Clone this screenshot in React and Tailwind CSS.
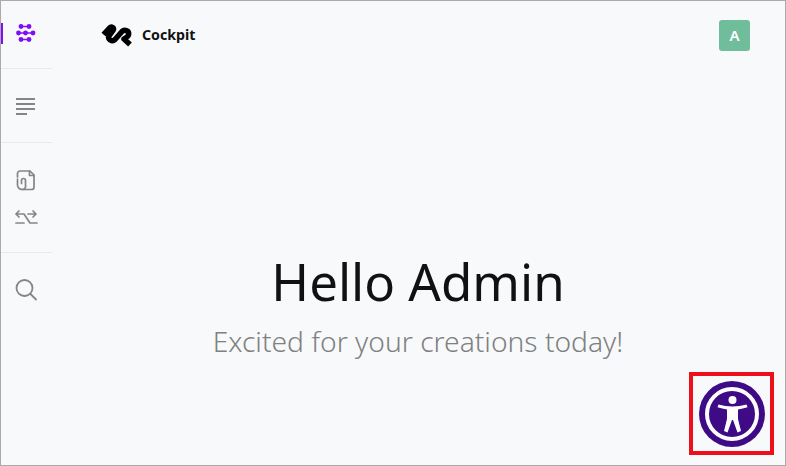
import React from "react";

const font = { fontFamily: '"Noto Sans", "Open Sans", sans-serif' };

function NavIcon({ children }) {
  return (
    <svg width="24" height="24" viewBox="0 0 24 24" fill="none" stroke="#858587" strokeWidth="1.7" strokeLinecap="round" strokeLinejoin="round">
      {children}
    </svg>
  );
}

function GridLogo() {
  return (
    <svg width="22" height="20" viewBox="0 0 22 20" fill="#7f0df5" stroke="#7f0df5">
      <path d="M6 3.500h8M2 10h18M6 16.500h8" strokeWidth="1.4" />
      <g stroke="none">
        <circle cx="6" cy="3.500" r="2.400" />
        <circle cx="14" cy="3.500" r="2.400" />
        <circle cx="3.500" cy="10" r="2.400" />
        <circle cx="10.500" cy="10" r="2.400" />
        <circle cx="18" cy="10" r="2.400" />
        <circle cx="6" cy="16.500" r="2.400" />
        <circle cx="14" cy="16.500" r="2.400" />
      </g>
    </svg>
  );
}

function Sidebar() {
  return (
    <div className="w-[51px] shrink-0 flex flex-col">
      <div className="relative h-[68px] flex items-center justify-center pr-[2px] pb-[4px] border-b border-[#e8e9ec]">
        <div className="absolute left-0 top-[22px] w-[2px] h-[21px] bg-[#7f0df5]" />
        <GridLogo />
      </div>
      <div className="h-[74px] flex items-center justify-center pr-[2px] border-b border-[#e8e9ec]">
        <svg width="20" height="18" viewBox="0 0 20 18" stroke="#858587" strokeWidth="2" fill="none">
          <path d="M0 2h19M0 7h19M0 12h19M0 17h11" />
        </svg>
      </div>
      <div className="h-[110px] flex flex-col items-center justify-center gap-[15px] pr-[2px] pt-[4px] border-b border-[#e8e9ec]">
        <NavIcon>
          <path d="M3.500 9V5.500A2.500 2.500 0 0 1 6 3h10l4 4v12a2.500 2.500 0 0 1-2.500 2.500H8" />
          <path d="M15.500 3v4.500H20" />
          <path d="M7.500 15.500v-3a2 2 0 0 1 4 0V17a3.500 3.500 0 0 1-3.500 4.500A4.500 4.500 0 0 1 3.500 17v-6" />
        </NavIcon>
        <NavIcon>
          <path d="M5 4L2 7l3 3M2 7h8l6 9h7" />
          <path d="M14 7h8M19 4l3 3-3 3" />
          <path d="M2 16h8" />
        </NavIcon>
      </div>
      <div className="flex-1 flex justify-center pr-[2px] pt-[25px]">
        <svg width="24" height="24" viewBox="0 0 24 24" fill="none" stroke="#858587" strokeWidth="1.8" strokeLinecap="round">
          <circle cx="10.500" cy="10" r="8" />
          <path d="M16.500 16l5.500 5.500" />
        </svg>
      </div>
    </div>
  );
}

function Header() {
  return (
    <div className="h-[68px] flex items-center justify-between pl-[46px] pr-[35px]">
      <div className="flex items-center gap-[4px] pb-[1px]">
        <svg width="40" height="32" viewBox="0 0 40 32" fill="none" stroke="#000" strokeWidth="5.500" strokeLinejoin="round">
          <path d="M5.500 15.500l6-6.500c2-2 5.500 0 3.500 2.500l-4 5.500c-2 3 3 6.500 6 3.500l7-8c2-2 7.500-1.500 6.500 3.500-.5 2-3.500 3-4.500 4l6 5.500" />
        </svg>
        <span className="text-[14.200px] font-bold text-[#111]">Cockpit</span>
      </div>
      <div className="w-[31px] h-[31px] rounded-[3px] bg-[#6fbd9b] flex items-center justify-center text-white text-[15px] font-semibold">
        A
      </div>
    </div>
  );
}

function AccessWidget() {
  return (
    <div className="absolute right-[11px] bottom-[10px] w-[85px] h-[83px] border-4 border-[#ee0f1d] bg-[#f8f9fb] flex items-center justify-center">
      <svg width="66" height="66" viewBox="0 0 66 66">
        <circle cx="33" cy="33" r="33" fill="#3e0a85" />
        <circle cx="33" cy="33" r="25" fill="none" stroke="#fff" strokeWidth="4" />
        <circle cx="33.500" cy="19" r="4" fill="#fff" />
        <path
          d="M19.500 23.500c4.500 1.200 9 2 14 2s9.500-.8 14-2l1 2.800c-3 1-6.500 1.800-9.500 2.300V38l3 12-3.500 1.500-4.500-12.500h-1L28.500 51.500 25 50l3-12v-9.400c-3-.5-6.500-1.300-9.500-2.300z"
          fill="#fff"
          strokeLinejoin="round"
        />
      </svg>
    </div>
  );
}

export default function App() {
  return (
    <div className="relative w-[786px] h-[466px] flex bg-[#f8f9fb] border border-[#ababab] overflow-hidden" style={font}>
      <Sidebar />
      <div className="flex-1 flex flex-col">
        <Header />
        <div className="flex flex-col items-center pt-[178px] pr-[1px]">
          <div className="text-[51px] leading-[68px] text-[#111]">Hello Admin</div>
          <div className="mt-[7px] text-[28.200px] leading-[38px] font-light text-[#808080]">Excited for your creations today!</div>
        </div>
      </div>
      <AccessWidget />
    </div>
  );
}
